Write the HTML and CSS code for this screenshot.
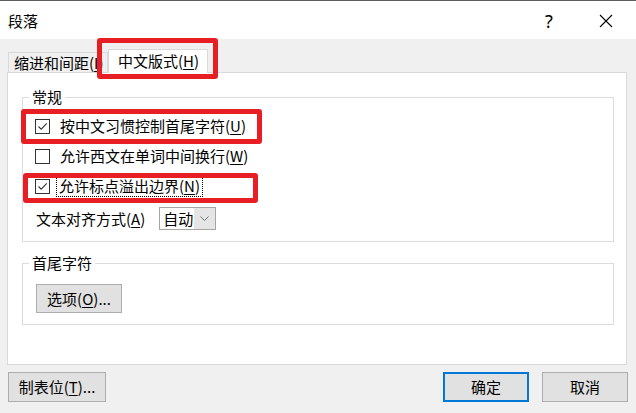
FILE: index.html
```html
<!DOCTYPE html>
<html lang="zh-CN">
<head>
<meta charset="utf-8">
<title>段落</title>
<link rel="stylesheet" href="styles.css">
</head>
<body>
<div class="window">
  <div class="titlebar">
    <span class="title">段落</span>
    <span class="help">?</span>
    <span class="close">
      <svg width="14" height="14" viewBox="0 0 14 14"><path d="M1 1 L13 13 M13 1 L1 13" stroke="#000" stroke-width="1.1" fill="none"/></svg>
    </span>
  </div>
  <div class="client">
    <div class="tabs">
      <div class="tab">缩进和间距(<u>I</u>)</div>
      <div class="tab active">中文版式(<u>H</u>)</div>
    </div>
    <div class="panel">
      <div class="group g1">
        <div class="group-title">常规</div>
        <div class="check-row">
          <span class="box"><svg width="13" height="13" viewBox="0 0 13 13"><path d="M2.5 6.5 L5.2 9.2 L10.8 3.4" stroke="#333" stroke-width="1.1" fill="none"/></svg></span>
          <span class="label">按中文习惯控制首尾字符(<u>U</u>)</span>
        </div>
        <div class="check-row">
          <span class="box"></span>
          <span class="label">允许西文在单词中间换行(<u>W</u>)</span>
        </div>
        <div class="check-row">
          <span class="box"><svg width="13" height="13" viewBox="0 0 13 13"><path d="M2.5 6.5 L5.2 9.2 L10.8 3.4" stroke="#333" stroke-width="1.1" fill="none"/></svg></span>
          <span class="label focus">允许标点溢出边界(<u>N</u>)</span>
        </div>
        <div class="combo-row">
          <span class="label">文本对齐方式(<u>A</u>)</span>
          <div class="combo">
            <span class="combo-value">自动</span>
            <span class="combo-btn"><svg width="9" height="5" viewBox="0 0 9 5"><path d="M0.5 0.5 L4.5 4.5 L8.5 0.5" stroke="#707070" stroke-width="1" fill="none"/></svg></span>
          </div>
        </div>
      </div>
      <div class="group g2">
        <div class="group-title">首尾字符</div>
        <button class="btn btn-options">选项(<u>O</u>)...</button>
      </div>
    </div>
    <div class="footer">
      <button class="btn btn-tabs">制表位(<u>T</u>)...</button>
      <div class="spacer"></div>
      <button class="btn btn-dialog primary">确定</button>
      <button class="btn btn-dialog">取消</button>
    </div>
  </div>
  <div class="mark mark-tab"></div>
  <div class="mark mark-1"></div>
  <div class="mark mark-2"></div>
</div>
</body>
</html>
```

FILE: styles.css
```css
* { box-sizing: border-box; }

html, body {
  margin: 0;
  padding: 0;
  background: #f0f0f0;
}

body {
  font-family: "Noto Sans CJK SC", "Noto Sans", sans-serif;
  font-size: 15px;
  color: #000;
  line-height: 18px;
}

u { text-decoration: underline; text-underline-offset: 2px; }

.window {
  position: relative;
  width: 636px;
  height: 413px;
  border-top: 1px solid #5c5c5c;
  display: flex;
  flex-direction: column;
  overflow: hidden;
}

.titlebar {
  height: 38px;
  background: #fff;
  display: flex;
  align-items: center;
  padding-left: 8px;
}

.title { flex: 1; padding-top: 2px; }

.help {
  width: 20px;
  text-align: center;
  font-family: "Noto Sans", sans-serif;
  font-size: 18px;
  line-height: 20px;
  margin-right: 40px;
  padding-top: 2px;
}

.close {
  width: 14px;
  height: 14px;
  margin-right: 23px;
  display: flex;
  margin-top: 2px;
}

.client {
  flex: 1;
  background: #f0f0f0;
  display: flex;
  flex-direction: column;
}

.tabs {
  display: flex;
  align-items: flex-end;
  padding-left: 8px;
  padding-top: 10px;
  height: 33px;
}

.tab {
  height: 20px;
  width: 100px;
  border: 1px solid #d9d9d9;
  border-bottom: none;
  padding-left: 5px;
  white-space: nowrap;
  overflow: hidden;
  display: flex;
  align-items: center;
  background: #f0f0f0;
}

.tab.active {
  position: relative;
  z-index: 1;
  height: 24px;
  width: 100px;
  margin-bottom: -1px;
  padding-left: 9px;
  background: #fff;
  padding-bottom: 1px;
}

.panel {
  margin: 0 9px 0 7px;
  height: 293px;
  background: #fff;
  border: 1px solid #d9d9d9;
  display: flex;
  flex-direction: column;
}

.group {
  position: relative;
  border: 1px solid #dcdcdc;
  margin-left: 14px;
  margin-right: 12px;
}

.group-title {
  position: absolute;
  top: -10px;
  left: 6px;
  padding: 0 3px;
  background: #fff;
  line-height: 18px;
}

.g1 {
  margin-top: 24px;
  padding: 13px 12px 11px 12px;
}

.g2 {
  margin-top: 21px;
  padding: 20px 13px 11px 13px;
}

.check-row {
  height: 30px;
  display: flex;
  align-items: center;
}

.box {
  width: 15px;
  height: 15px;
  border: 1px solid #333;
  background: #fff;
  display: flex;
  align-items: center;
  justify-content: center;
  margin-right: 10px;
  flex: none;
}

.label { white-space: nowrap; }

.focus {
  outline: 1px dotted #000;
  outline-offset: 0;
  padding: 1px 2px;
  margin-left: -3px;
}

.combo-row {
  margin-top: 6px;
  display: flex;
  align-items: center;
  padding-left: 1px;
}

.combo {
  margin-left: 14px;
  width: 57px;
  height: 23px;
  border: 1px solid #a6a6a6;
  display: flex;
}

.combo-value {
  flex: 1;
  padding-left: 3px;
  display: flex;
  align-items: center;
  background: #fff;
}

.combo-btn {
  width: 21px;
  background: #e5e5e5;
  display: flex;
  align-items: center;
  justify-content: center;
}

.btn {
  font: inherit;
  color: #000;
  background: #e1e1e1;
  border: 1px solid #adadad;
  padding: 0;
  height: 30px;
  display: flex;
  align-items: center;
  justify-content: center;
  white-space: nowrap;
}

.btn-options { width: 86px; height: 29px; }

.footer {
  display: flex;
  align-items: flex-start;
  padding: 7px 8px 0 8px;
}

.spacer { flex: 1; }

.btn-tabs { width: 98px; }

.btn-dialog { width: 86px; margin-left: 13px; }

.btn.primary { border: 2px solid #0078d7; }

.mark {
  position: absolute;
  border: 5px solid #e81e25;
  border-radius: 3px;
  pointer-events: none;
  z-index: 5;
}

.mark-tab { left: 97px; top: 37px; width: 121px; height: 41px; }
.mark-1 { left: 21px; top: 108px; width: 241px; height: 35px; }
.mark-2 { left: 23px; top: 172px; width: 235px; height: 30px; }
```
